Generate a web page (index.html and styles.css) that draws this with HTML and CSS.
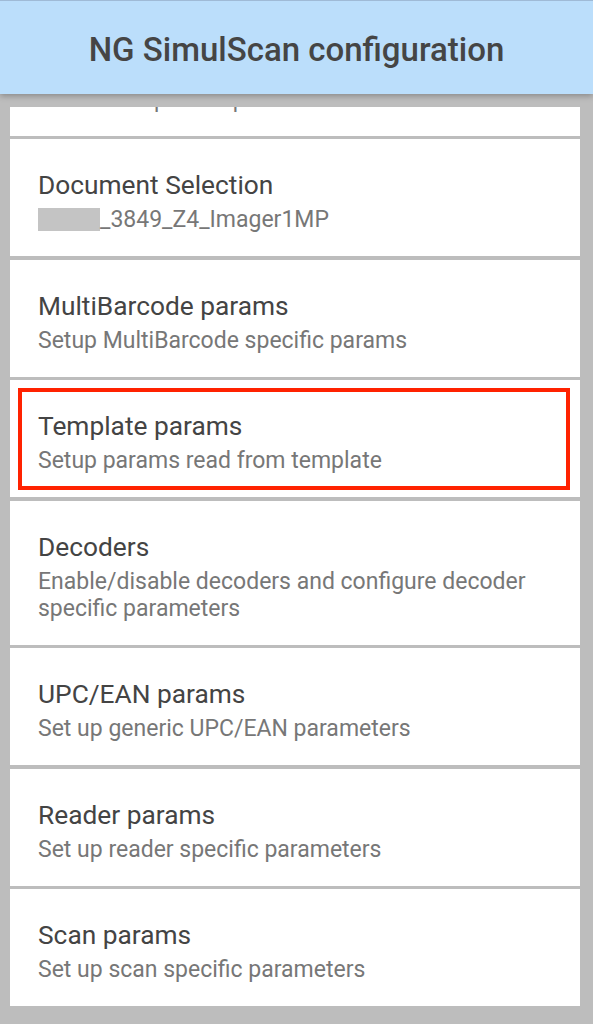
FILE: index.html
```html
<!DOCTYPE html>
<html>
<head>
<meta charset="utf-8">
<link rel="stylesheet" href="styles.css">
</head>
<body>
<header class="appbar"><h1 class="appbar-title">NG SimulScan configuration</h1></header>
<main class="viewport">
  <ul class="list">
    <li class="card card-partial">
      <div class="card-sub">Use the output template</div>
    </li>
    <li class="card">
      <div class="card-title">Document Selection</div>
      <div class="card-sub"><span class="redact"></span>_3849_Z4_Imager1MP</div>
    </li>
    <li class="card">
      <div class="card-title">MultiBarcode params</div>
      <div class="card-sub">Setup MultiBarcode specific params</div>
    </li>
    <li class="card card-highlight">
      <div class="card-title">Template params</div>
      <div class="card-sub">Setup params read from template</div>
      <span class="highlight-box"></span>
    </li>
    <li class="card">
      <div class="card-title">Decoders</div>
      <div class="card-sub">Enable/disable decoders and configure decoder specific parameters</div>
    </li>
    <li class="card">
      <div class="card-title">UPC/EAN params</div>
      <div class="card-sub">Set up generic UPC/EAN parameters</div>
    </li>
    <li class="card">
      <div class="card-title">Reader params</div>
      <div class="card-sub">Set up reader specific parameters</div>
    </li>
    <li class="card">
      <div class="card-title">Scan params</div>
      <div class="card-sub">Set up scan specific parameters</div>
    </li>
  </ul>
</main>
</body>
</html>
```
FILE: styles.css
```css
* { box-sizing: border-box; }
html, body {
  margin: 0;
  padding: 0;
  width: 593px;
  height: 1024px;
  overflow: hidden;
  background: #bdbdbd;
  font-family: Roboto, "Noto Sans", sans-serif;
}
.appbar {
  position: relative;
  z-index: 2;
  height: 94px;
  padding-top: 3px;
  background: #bbdefb;
  border-top: 1px solid #9fbad6;
  display: flex;
  align-items: center;
  justify-content: center;
  box-shadow: 0 2px 6px rgba(0,0,0,0.28);
}
.appbar-title {
  margin: 0;
  font-size: 33px;
  font-weight: 500;
  color: #454545;
}
.viewport {
  margin-top: 13px;
  height: 917px;
  overflow: hidden;
}
.list {
  list-style: none;
  margin: 0;
  padding: 0;
  display: flex;
  flex-direction: column;
  gap: 3.5px;
}
.card {
  position: relative;
  margin-left: 10px;
  width: 570px;
  background: #ffffff;
  padding: 31px 28px 23.2px 28px;
}
.card-partial {
  margin-top: -88px;
  padding-top: 61.8px;
}
.card-title {
  font-size: 26.3px;
  line-height: 31px;
  color: #444444;
}
.card-sub {
  margin-top: 4.8px;
  font-size: 23px;
  line-height: 27px;
  color: #777777;
}
.redact {
  display: inline-block;
  width: 62px;
  height: 23px;
  vertical-align: -4px;
  background: #c4c4c4;
}
.highlight-box {
  position: absolute;
  left: 8px;
  right: 10px;
  top: 8px;
  bottom: 7px;
  border: 4px solid #ff2200;
}
```
